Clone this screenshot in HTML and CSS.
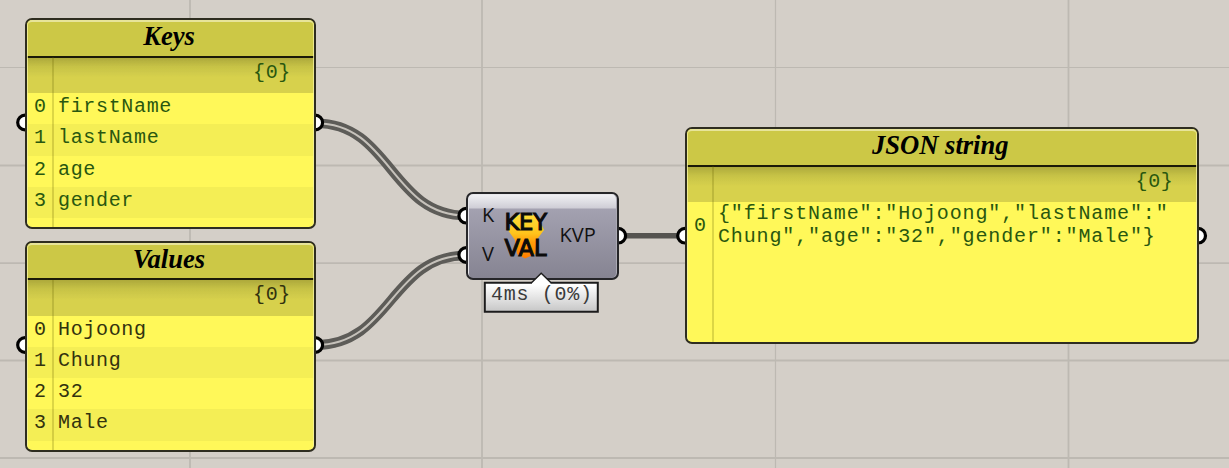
FILE: index.html
```html
<!DOCTYPE html>
<html lang="en">
<head>
<meta charset="utf-8">
<title>Key value canvas</title>
<link rel="stylesheet" href="styles.css">
</head>
<body>
<main class="canvas">
  <svg class="layer" width="1229" height="468" viewBox="0 0 1229 468">
    <g class="grid">
      <path d="M0 67.5H1229M775.5 0V468" stroke-width="1.2"/>
      <path d="M0 165.5H1229M0 263.2H1229M0 360.5H1229M0 458H1229M190 0V468M482 0V468M1068.5 0V468" stroke-width="1.8"/>
    </g>
    <g class="wires">
      <path class="wire-outer" d="M316 123.2C391 123.2 391 215.5 466 215.5"/>
      <path class="wire-outer" d="M316 345C391 345 391 255.5 466 255.5"/>
      <path class="wire-inner" d="M316 123.2C391 123.2 391 215.5 466 215.5"/>
      <path class="wire-inner" d="M316 345C391 345 391 255.5 466 255.5"/>
      <path class="wire-single" d="M618 235.8H686"/>
    </g>
    <g class="grips">
      <circle cx="25" cy="122.5" r="7.3"/><circle cx="315.3" cy="122.5" r="7.3"/>
      <circle cx="25" cy="345" r="7.3"/><circle cx="315.3" cy="345" r="7.3"/>
      <circle cx="466.2" cy="215.7" r="7.3"/><circle cx="466.2" cy="255" r="7.3"/>
      <circle cx="618.3" cy="235.7" r="7.3"/>
      <circle cx="685" cy="235.7" r="7.3"/><circle cx="1198.2" cy="235.7" r="7.3"/>
    </g>
  </svg>

  <section class="panel panel-keys green">
    <h2 class="title">Keys</h2>
    <div class="path">{0}</div>
    <div class="row"><span class="index">0</span><span>firstName</span></div>
    <div class="row alt"><span class="index">1</span><span>lastName</span></div>
    <div class="row"><span class="index">2</span><span>age</span></div>
    <div class="row alt"><span class="index">3</span><span>gender</span></div>
  </section>

  <section class="panel panel-values">
    <h2 class="title">Values</h2>
    <div class="path">{0}</div>
    <div class="row"><span class="index">0</span><span>Hojoong</span></div>
    <div class="row alt"><span class="index">1</span><span>Chung</span></div>
    <div class="row"><span class="index">2</span><span>32</span></div>
    <div class="row alt"><span class="index">3</span><span>Male</span></div>
  </section>

  <section class="panel panel-json green">
    <h2 class="title">JSON string</h2>
    <div class="path">{0}</div>
    <div class="row wrap"><span class="index">0</span><span>{"firstName":"Hojoong","lastName":"<br>Chung","age":"32","gender":"Male"}</span></div>
  </section>

  <section class="component">
    <div class="inputs"><span>K</span><span>V</span></div>
    <svg class="icon" width="46" height="50" viewBox="502 210 46 50">
      <defs>
        <linearGradient id="flame" x1="0" y1="0" x2="0" y2="1">
          <stop offset="0" stop-color="#ffe03c"/><stop offset=".45" stop-color="#ffc41c"/>
          <stop offset=".65" stop-color="#ff9c08"/><stop offset="1" stop-color="#ff7d00"/>
        </linearGradient>
      </defs>
      <path fill="url(#flame)" d="M515 216L526 212.5L538 217L544 230L536.5 240L535 254L525 258.5L517 254L515 240L508.5 231Z"/>
      <text class="icon-text" x="504.5" y="230.3" textLength="42.5" lengthAdjust="spacing">KEY</text>
      <text class="icon-text" x="504.5" y="255.5" textLength="42" lengthAdjust="spacing">VAL</text>
    </svg>
    <span class="output">KVP</span>
  </section>

  <div class="timing">
    <svg class="bubble" width="117" height="43" viewBox="483 271 117 43">
      <defs>
        <linearGradient id="tag" x1="0" y1="0" x2="0" y2="1">
          <stop offset=".3" stop-color="#fff"/><stop offset="1" stop-color="#c6c6c6"/>
        </linearGradient>
      </defs>
      <path fill="url(#tag)" d="M484.8 282.7H532L541.2 273.3L550.5 282.7H597.8V311.7H484.8Z"/>
      <path fill="none" stroke="#1c1c1c" stroke-width="2" d="M532 282.7H484.8V311.7H597.8V282.7H550.5"/>
      <path fill="none" stroke="#1c1c1c" stroke-width="1.4" d="M531.5 282.7L541.2 273.3L551 282.7"/>
    </svg>
    <span class="timing-text">4ms (0%)</span>
  </div>
</main>
</body>
</html>
```
FILE: styles.css
```css
body {
  margin: 0;
}

.canvas {
  position: relative;
  width: 1229px;
  height: 468px;
  overflow: hidden;
  background: #d4cfc8;
}

.layer {
  position: absolute;
  inset: 0;
}

.grid {
  stroke: #bdb9b2;
  fill: none;
}

.wires {
  fill: none;
}

.wire-outer {
  stroke: #5d5c58;
  stroke-width: 9.6;
}

.wire-inner {
  stroke: #c6c2bb;
  stroke-width: 2;
}

.wire-single {
  stroke: #555450;
  stroke-width: 5.5;
}

.grips {
  fill: #fff;
  stroke: #000;
  stroke-width: 3.2;
}

.panel {
  position: absolute;
  box-sizing: border-box;
  border: 2px solid #2e2d20;
  border-radius: 7px;
  overflow: hidden;
  background: #fff859;
  color: #33330f;
  font: 20px/31.25px "Liberation Mono", monospace;
  letter-spacing: 0.66px;
}

.green {
  color: #2a5810;
}

.panel::after {
  content: "";
  position: absolute;
  inset: 0;
  border: 1px solid #f5f3a0;
  border-top: 2px solid #eeebb0;
  border-bottom: 0;
  border-radius: 5px;
  opacity: 0.8;
}

/* Vertical rule between the index column and the values */
.panel::before {
  content: "";
  position: absolute;
  left: 25px;
  top: 37px;
  bottom: 0;
  width: 1.5px;
  background: rgba(100, 95, 0, 0.22);
}

.panel-keys {
  left: 25px;
  top: 18px;
  width: 291px;
  height: 211px;
}

.panel-values {
  left: 25px;
  top: 240.6px;
  width: 291px;
  height: 211px;
}

.panel-json {
  left: 685px;
  top: 127px;
  width: 513.5px;
  height: 217px;
}

.title {
  box-sizing: border-box;
  height: 37.5px;
  margin: 0;
  padding-right: 3px;
  border-bottom: 2px solid #1c1b08;
  background: #ccc947;
  color: #000;
  font: italic bold 26.6px/33px "Liberation Serif", serif;
  letter-spacing: 0;
  text-align: center;
}

.path {
  box-sizing: border-box;
  height: 35.5px;
  padding-right: 23px;
  background: linear-gradient(#aeaa3c, #c7c347 25%, #d7d14d 55%, #d7d14d);
  line-height: 29px;
  text-align: right;
}

.row {
  display: flex;
  height: 31.25px;
  line-height: 28px;
}

.row.alt {
  background: #f4ee55;
}

.index {
  width: 24px;
  padding-left: 7px;
  flex: none;
}

.row.wrap {
  height: auto;
  align-items: center;
  line-height: 23.4px;
  letter-spacing: 0.87px;
}

.wrap > span:last-child {
  white-space: nowrap;
}

.component {
  position: absolute;
  box-sizing: border-box;
  left: 466px;
  top: 192px;
  width: 152.5px;
  height: 88px;
  display: flex;
  padding: 0 0 0 14px;
  border: 2px solid #262629;
  border-radius: 7px;
  background: linear-gradient(#f2f2f5, #cfced6 14px, #a3a1b0 15px, #868492);
  box-shadow: inset 1px 1px 0 #e8e8ec, inset -1px 0 0 #aaa9b4;
  color: #111;
  font: 20px/27px "Open Sans", sans-serif;
}

.inputs {
  display: flex;
  flex-direction: column;
  gap: 12px;
  width: 20px;
  padding-top: 7px;
}

.icon {
  margin-top: 16px;
  overflow: visible;
}

.icon-text {
  fill: #0b0b0b;
  stroke: #0b0b0b;
  stroke-width: 1.1px;
  font: 22.6px "DejaVu Sans", sans-serif;
}

.output {
  margin: 26.5px 0 0 11.5px;
}

.timing {
  position: absolute;
  left: 483px;
  top: 271px;
  width: 117px;
  height: 43px;
}

.bubble {
  display: block;
}

.timing-text {
  position: absolute;
  left: 8px;
  top: 11px;
  color: #3a3a3a;
  font: 20px/26px "Liberation Mono", monospace;
  letter-spacing: 0.7px;
  white-space: nowrap;
}
```
